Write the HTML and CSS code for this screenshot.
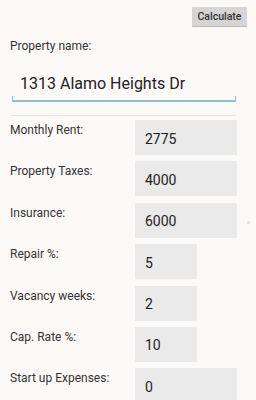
FILE: index.html
```html
<!DOCTYPE html>
<html lang="en">
<head>
  <meta charset="UTF-8" />
  <meta name="viewport" content="width=device-width, initial-scale=1.0"/>
  <title>Rental Calculator</title>
  <link rel="stylesheet" href="styles.css">
</head>
<body>

  <!-- Top bar -->
  <div class="topbar">
    <button class="calc-btn">Calculate</button>
  </div>

  <!-- Property name -->
  <div class="name-block">
    <label class="name-label">Property name:</label>
    <div class="name-field">
      <input type="text" class="name-input" value="1313 Alamo Heights Dr">
    </div>
  </div>

  <div class="divider"></div>

  <!-- Numbers -->
  <div class="fields">
    <div class="field">
      <label>Monthly Rent:</label>
      <input type="text" class="num wide" value="2775">
    </div>
    <div class="field">
      <label>Property Taxes:</label>
      <input type="text" class="num wide" value="4000">
    </div>
    <div class="field">
      <label>Insurance:</label>
      <input type="text" class="num wide" value="6000">
    </div>
    <div class="field">
      <label>Repair %:</label>
      <input type="text" class="num narrow" value="5">
    </div>
    <div class="field">
      <label>Vacancy weeks:</label>
      <input type="text" class="num narrow" value="2">
    </div>
    <div class="field">
      <label>Cap. Rate %:</label>
      <input type="text" class="num narrow" value="10">
    </div>
    <div class="field">
      <label>Start up Expenses:</label>
      <input type="text" class="num wide" value="0">
    </div>
  </div>

  <div class="scroll-dot"></div>

</body>
</html>
```

FILE: styles.css
```css
body {
  margin: 0;
  background: #fcfaf9;
  font-family: Roboto, "Liberation Sans", sans-serif;
  color: #333;
  position: relative;
  height: 400px;
  overflow: hidden;
}

.topbar {
  display: flex;
  justify-content: flex-end;
  padding: 7px 9px 0 0;
}

.calc-btn {
  width: 55px;
  height: 20px;
  background: #d6d5d5;
  border: none;
  border-bottom: 1px solid #b9b8b8;
  border-radius: 1px;
  font-family: Roboto, "Liberation Sans", sans-serif;
  font-size: 10.5px;
  font-weight: 500;
  color: #333;
  padding: 0;
}

/* Property name */
.name-block {
  padding: 12px 20px 0 10px;
}

.name-label {
  display: block;
  font-size: 12px;
  line-height: 14px;
}

.name-field {
  position: relative;
  margin: 21px 0 0 2px;
  border-bottom: 2px solid #8cc0d0;
}

.name-field::before,
.name-field::after {
  content: "";
  position: absolute;
  bottom: 0;
  width: 1px;
  height: 4px;
  background: #8cc0d0;
}

.name-field::before { left: 0; }
.name-field::after { right: 0; }

.name-input {
  display: block;
  width: 100%;
  box-sizing: border-box;
  border: none;
  background: transparent;
  font-family: Roboto, "Liberation Sans", sans-serif;
  font-size: 16px;
  color: #222;
  padding: 0 0 7px 8px;
  outline: none;
}

.divider {
  height: 1px;
  background: #e6e4e3;
  margin: 13px 20px 0 11px;
}

/* Number rows */
.fields {
  display: flex;
  flex-direction: column;
  gap: 6.4px;
  padding: 4px 0 0 10px;
}

.field {
  display: grid;
  grid-template-columns: 125px auto;
  align-items: start;
  height: 35px;
}

.field label {
  font-size: 12px;
  line-height: 14px;
  padding-top: 3px;
}

.num {
  height: 35px;
  box-sizing: border-box;
  border: none;
  background: #ebeaea;
  font-family: Roboto, "Liberation Sans", sans-serif;
  font-size: 14px;
  color: #222;
  padding: 2px 0 0 10px;
  outline: none;
}

.wide { width: 102px; }
.narrow { width: 62px; }

.scroll-dot {
  position: absolute;
  left: 247px;
  top: 221px;
  width: 3px;
  height: 3px;
  border-radius: 50%;
  background: #ddd;
}
```
